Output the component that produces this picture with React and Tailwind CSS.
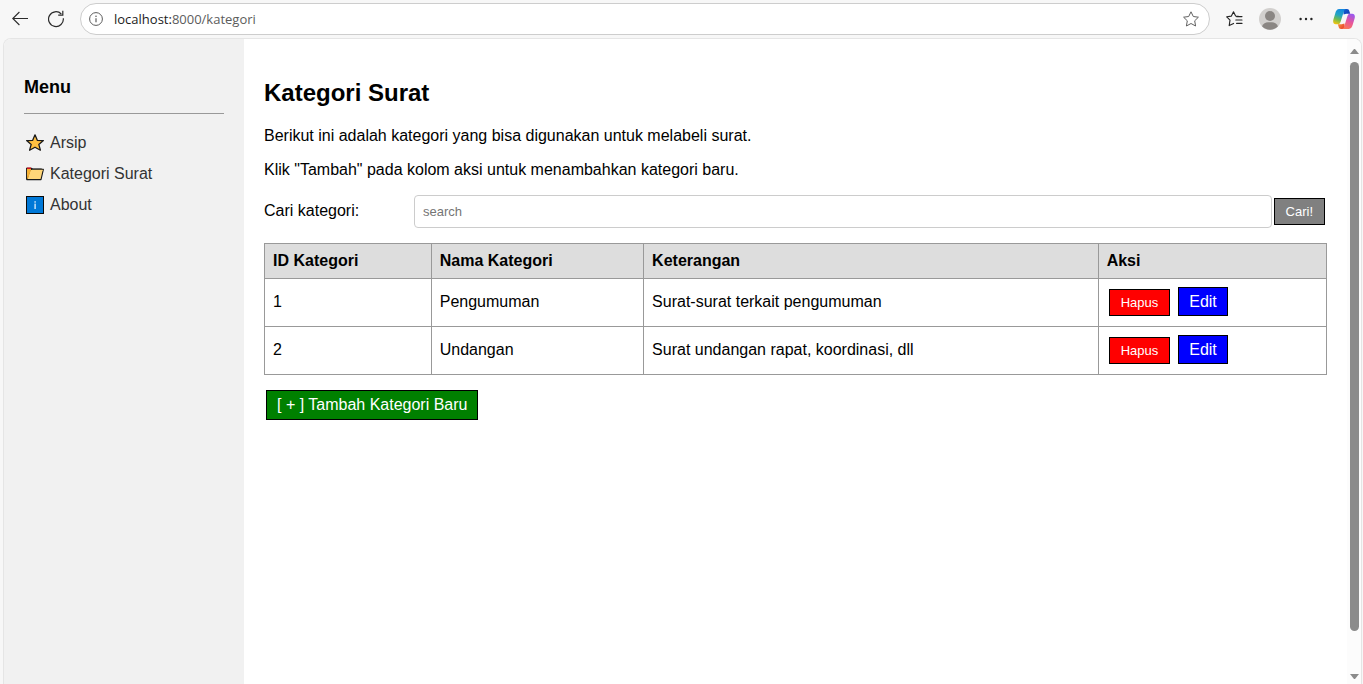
import React from "react";

const categories = [
  { id: 1, name: "Pengumuman", description: "Surat-surat terkait pengumuman" },
  { id: 2, name: "Undangan", description: "Surat undangan rapat, koordinasi, dll" },
];

function StarIcon() {
  return (
    <svg width="20" height="20" viewBox="0 0 20 20" aria-hidden="true">
      <path
        d="M10 1.8 L12.3 7.3 L18.4 7.6 L13.8 11.4 L15.4 17.2 L10 14.2 L4.6 17.2 L6.2 11.4 L1.6 7.6 L7.7 7.3 Z"
        fill="#ffc040"
        stroke="#1a1a1a"
        strokeWidth="1.3"
        strokeLinejoin="round"
      />
    </svg>
  );
}

function FolderIcon() {
  return (
    <svg width="20" height="20" viewBox="0 0 20 20" aria-hidden="true">
      <path d="M1.6 15.6 V4.4 H6.6 L7.6 5 H16.2 V6" fill="#ffd679" stroke="#1a1a1a" strokeWidth="1.1" />
      <path
        d="M1.8 15.6 L5.2 5.4 H18.4 L16 15.6 Z"
        fill="#ffd679"
        stroke="#1a1a1a"
        strokeWidth="1.1"
        strokeLinejoin="round"
      />
      <path d="M2.1 5 H6.2 L3.2 14 L2.1 15 Z" fill="#f7b030" />
      <path d="M2 3.4 H6 V5 H2 Z" fill="#d0131f" />
      <path d="M7 5.8 H17.8 L17.6 6.8 H6.6 Z" fill="#ffd679" />
    </svg>
  );
}

function InfoIcon() {
  return (
    <svg width="20" height="20" viewBox="0 0 20 20" aria-hidden="true">
      <rect x="1.5" y="1.5" width="17" height="17" fill="#0078d7" stroke="#0b0b0b" strokeWidth="1" />
      <rect x="9.4" y="6.2" width="1.4" height="1.5" fill="#d5e9f9" />
      <rect x="9.4" y="8.6" width="1.4" height="5.4" fill="#d5e9f9" />
    </svg>
  );
}

const menuItems = [
  { label: "Arsip", Icon: StarIcon },
  { label: "Kategori Surat", Icon: FolderIcon },
  { label: "About", Icon: InfoIcon },
];

function BrowserBar() {
  return (
    <header className="flex h-[38px] items-center pr-2 pl-3">
      <button type="button" aria-label="Back" className="mr-5">
        <svg width="16" height="16" viewBox="0 0 16 16" fill="none" stroke="#2b2b2b" strokeWidth="1.1">
          <path d="M16 7.5 H0.8 M7.4 1 L0.8 7.5 L7.4 14" />
        </svg>
      </button>
      <button type="button" aria-label="Refresh" className="mr-4">
        <svg width="16" height="18" viewBox="0 0 16 18" fill="none" stroke="#2b2b2b" strokeWidth="1.2">
          <path d="M15.3 8.2 A7.4 7.4 0 1 1 13.3 4" />
          <path d="M14.8 0.8 V5.2 H10.2" />
        </svg>
      </button>
      <div className="flex h-8 flex-1 items-center rounded-full border border-[#cdcdcd] bg-white pr-2.5 pl-2">
        <svg width="14" height="14" viewBox="0 0 14 14" fill="none" stroke="#5c5c5c" aria-hidden="true">
          <circle cx="7" cy="7" r="6.4" />
          <path d="M7 6.2 V10.2" strokeWidth="1.2" />
          <circle cx="7" cy="4.2" r="0.8" fill="#5c5c5c" stroke="none" />
        </svg>
        <div className="ml-[11px] flex-1 font-['Open_Sans','Noto_Sans',sans-serif] text-[13px] leading-5 text-[#5c5c5c]">
          <span className="text-[#1b1b1b]">localhost:</span>8000/kategori
        </div>
        <button type="button" aria-label="Add to favorites">
          <svg width="16" height="16" viewBox="0 0 16 16" fill="none" stroke="#616161" strokeLinejoin="round">
            <path d="M8 0.8 L10.3 5.5 L15.4 6.2 L11.7 9.8 L12.6 15 L8 12.5 L3.4 15 L4.3 9.8 L0.6 6.2 L5.7 5.5 Z" />
          </svg>
        </button>
      </div>
      <button type="button" aria-label="Favorites" className="ml-4">
        <svg
          width="17"
          height="16"
          viewBox="0 0 17 16"
          fill="none"
          stroke="#242424"
          strokeWidth="1.1"
          strokeLinecap="round"
          strokeLinejoin="round"
        >
          <path d="M12.4 5.4 L9.6 5 L7.5 0.7 L5.4 5.1 L0.7 5.8 L4 9.2 L3.2 14.6 L7.6 12.4" />
          <path d="M10.6 5.6 H16 M9.8 9 H16 M10.6 12.4 H16" />
        </svg>
      </button>
      <button type="button" aria-label="Profile" className="ml-4">
        <svg width="22" height="22" viewBox="0 0 22 22">
          <circle cx="11" cy="11" r="11" fill="#d2d0ce" />
          <circle cx="11" cy="8" r="5" fill="#8a8683" />
          <path d="M3 18.2 C4.2 15.6 6.6 14.2 9 14.2 H13 C15.4 14.2 17.8 15.6 19 18.2 A11 11 0 0 1 3 18.2 Z" fill="#8a8683" />
        </svg>
      </button>
      <button type="button" aria-label="Settings and more" className="ml-[18px]">
        <svg width="14" height="4" viewBox="0 0 14 4" fill="#242424">
          <circle cx="1.6" cy="2" r="1.2" />
          <circle cx="7" cy="2" r="1.2" />
          <circle cx="12.4" cy="2" r="1.2" />
        </svg>
      </button>
      <button type="button" aria-label="Copilot" className="ml-5">
        <svg width="22" height="20" viewBox="0 0 22 20">
          <defs>
            <linearGradient id="cpLeft" x1="0.6" y1="0" x2="0.3" y2="1">
              <stop offset="0" stopColor="#1488e0" />
              <stop offset="0.4" stopColor="#22a4c4" />
              <stop offset="0.7" stopColor="#6fbb50" />
              <stop offset="1" stopColor="#f0c40f" />
            </linearGradient>
            <linearGradient id="cpRight" x1="0.7" y1="0" x2="0.3" y2="1">
              <stop offset="0" stopColor="#9a58ee" />
              <stop offset="0.5" stopColor="#e8559b" />
              <stop offset="1" stopColor="#fb7a55" />
            </linearGradient>
            <linearGradient id="cpTop" x1="0" y1="0" x2="1" y2="1">
              <stop offset="0" stopColor="#1264d2" />
              <stop offset="1" stopColor="#1236b4" />
            </linearGradient>
            <linearGradient id="cpBottom" x1="0" y1="0" x2="1" y2="0.6">
              <stop offset="0" stopColor="#f99a3a" />
              <stop offset="1" stopColor="#e8412e" />
            </linearGradient>
          </defs>
          <path d="M10 0 H14 C15.4 0 16 0.8 16.4 2.2 L17.2 4.8 H13.2 L10.6 5.6 Z" fill="url(#cpTop)" />
          <path d="M12 20 H8 C6.6 20 6 19.2 5.6 17.8 L4.8 15.2 H8.8 L11.4 14.4 Z" fill="url(#cpBottom)" />
          <path d="M13 0 H6.2 C4 0 3 1.8 2.2 4.4 L0.4 10.4 C-0.4 13.2 0.6 15.2 2.8 15.2 H5 C6.6 15.2 7.2 14 7.7 12.4 L10.8 2.4 C11.2 1 11.8 0.3 13 0 Z" fill="url(#cpLeft)" />
          <path d="M9 20 H15.8 C18 20 19 18.2 19.8 15.6 L21.6 9.6 C22.4 6.8 21.4 4.8 19.2 4.8 H17 C15.4 4.8 14.8 6 14.3 7.6 L11.2 17.6 C10.8 19 10.2 19.7 9 20 Z" fill="url(#cpRight)" />
        </svg>
      </button>
    </header>
  );
}

function Sidebar() {
  return (
    <aside className="w-60 shrink-0 bg-[#f1f1f1] px-5 pt-[37px]">
      <h3 className="text-lg leading-[22px] font-bold">Menu</h3>
      <hr className="mt-[15px] border-t border-[#999999]" />
      <nav className="mt-[13px]">
        <ul>
          {menuItems.map(({ label, Icon }) => (
            <li key={label}>
              <a href="#" className="flex h-[31px] items-center gap-[5px] pl-px text-base text-[#333333]">
                <Icon />
                {label}
              </a>
            </li>
          ))}
        </ul>
      </nav>
    </aside>
  );
}

function CategoryTable() {
  const heading = "border border-[#999999] px-2 text-left";
  const cell = "border border-[#999999] px-2 pb-0.5 text-left";
  return (
    <table className="mt-[15px] w-full table-fixed border-collapse">
      <colgroup>
        <col className="w-[15.7%]" />
        <col className="w-[20%]" />
        <col className="w-[42.8%]" />
        <col />
      </colgroup>
      <thead>
        <tr className="h-[35px] bg-[#dddddd]">
          <th className={heading}>ID Kategori</th>
          <th className={heading}>Nama Kategori</th>
          <th className={heading}>Keterangan</th>
          <th className={heading}>Aksi</th>
        </tr>
      </thead>
      <tbody>
        {categories.map((c) => (
          <tr key={c.id} className="h-12">
            <td className={cell}>{c.id}</td>
            <td className={cell}>{c.name}</td>
            <td className={cell}>{c.description}</td>
            <td className={cell}>
              <div className="flex items-end gap-2 pl-0.5">
                <button
                  type="button"
                  className="border border-black bg-[#ff0000] px-[11px] py-[5px] text-[13px] leading-[15px] text-white"
                >
                  Hapus
                </button>
                <a href="#" className="border border-black bg-[#0000ff] px-2.5 py-[5px] leading-[17px] text-white">
                  Edit
                </a>
              </div>
            </td>
          </tr>
        ))}
      </tbody>
    </table>
  );
}

function ScrollBar() {
  return (
    <div className="flex w-3.5 shrink-0 flex-col items-center bg-[#fcfcfc] pt-2.5 pb-[5px]" aria-hidden="true">
      <svg width="9" height="5" viewBox="0 0 9 5" fill="#8b8b8b">
        <path d="M0 5 L4 0 H5 L9 5 Z" />
      </svg>
      <div className="mt-2 mb-[43px] w-[9px] flex-1 rounded-full bg-[#8b8b8b]" />
      <svg width="9" height="5" viewBox="0 0 9 5" fill="#8b8b8b">
        <path d="M0 0 L4 5 H5 L9 0 Z" />
      </svg>
    </div>
  );
}

export default function App() {
  return (
    <div className="flex min-h-screen flex-col bg-[#f7f7f7] font-['Liberation_Sans',Arial,sans-serif] text-base text-black">
      <BrowserBar />
      <div className="mr-px ml-[3px] flex flex-1 overflow-hidden rounded-t-lg border border-b-0 border-[#e5e5e5] bg-white">
        <Sidebar />
        <main className="min-w-0 flex-1 px-5 pt-10">
          <h2 className="text-2xl leading-7 font-bold">Kategori Surat</h2>
          <p className="mt-5 leading-[18px]">Berikut ini adalah kategori yang bisa digunakan untuk melabeli surat.</p>
          <p className="mt-4 leading-[18px]">Klik "Tambah" pada kolom aksi untuk menambahkan kategori baru.</p>
          <form className="mt-4 flex items-center pr-0.5" onSubmit={(e) => e.preventDefault()}>
            <label htmlFor="search" className="w-[150px] shrink-0 pb-0.5 leading-[18px]">
              Cari kategori:
            </label>
            <input
              id="search"
              type="text"
              placeholder="search"
              className="h-[33px] min-w-0 flex-1 rounded border border-[#cccccc] px-2 text-[13px] placeholder:text-[#757575]"
            />
            <button
              type="submit"
              className="ml-0.5 border border-black bg-[#808080] px-[11px] py-[5px] text-[13px] leading-[15px] text-white"
            >
              Cari!
            </button>
          </form>
          <CategoryTable />
          <a
            href="#"
            className="mt-[15px] ml-0.5 inline-block border border-black bg-[#008000] px-2.5 py-[5px] leading-[18px] text-white"
          >
            [ + ] Tambah Kategori Baru
          </a>
        </main>
        <ScrollBar />
      </div>
    </div>
  );
}
